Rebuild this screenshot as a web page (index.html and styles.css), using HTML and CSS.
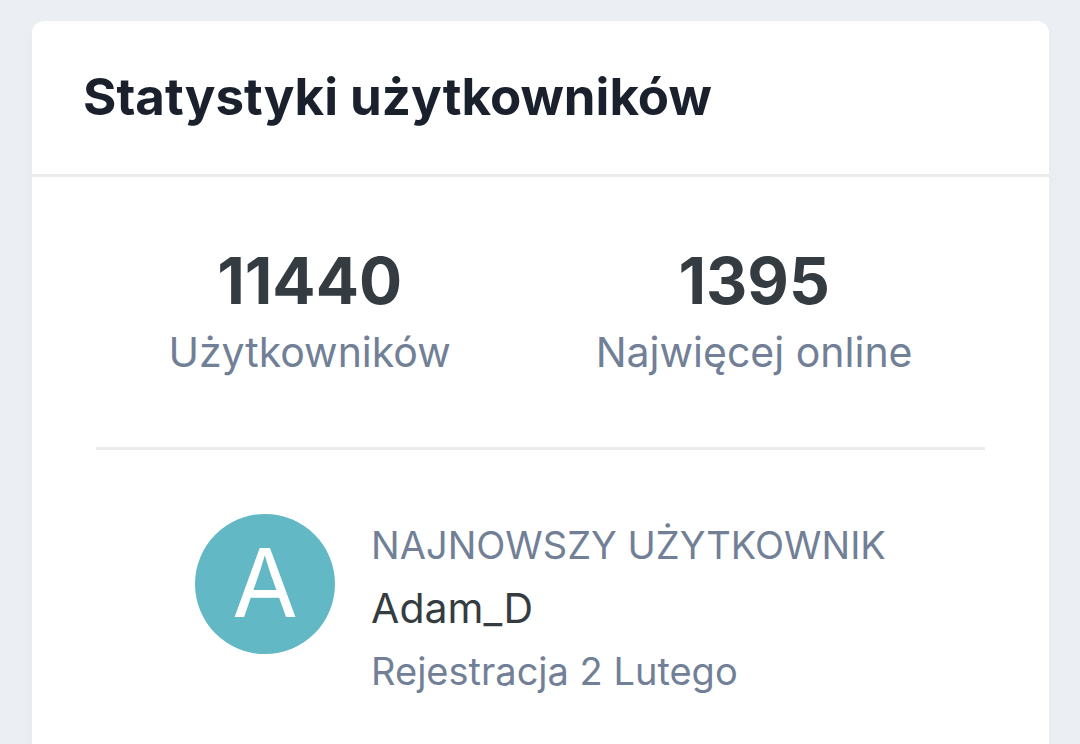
FILE: index.html
```html
<!DOCTYPE html>
<html lang="pl">
<head>
  <meta charset="UTF-8" />
  <meta name="viewport" content="width=device-width, initial-scale=1.0"/>
  <title>Statystyki użytkowników</title>
  <link rel="stylesheet" href="styles.css">
</head>
<body>

  <section class="widget">
    <h3 class="widget-title">Statystyki użytkowników</h3>
    <div class="widget-body">
      <dl class="stats">
        <div class="stat">
          <dd class="stat-value">11440</dd>
          <dt class="stat-label">Użytkowników</dt>
        </div>
        <div class="stat">
          <dd class="stat-value">1395</dd>
          <dt class="stat-label">Najwięcej online</dt>
        </div>
      </dl>
      <hr class="divider">
      <div class="member">
        <a class="avatar" href="#" aria-label="Adam_D">
          <svg viewBox="0 0 140 140" aria-hidden="true">
            <text x="70" y="103" text-anchor="middle">A</text>
          </svg>
        </a>
        <div class="member-info">
          <span class="minor">NAJNOWSZY UŻYTKOWNIK</span>
          <a class="member-name" href="#">Adam_D</a>
          <span class="minor">Rejestracja 2 Lutego</span>
        </div>
      </div>
    </div>
  </section>

</body>
</html>
```
FILE: styles.css
```css
* {
  box-sizing: border-box;
}

body {
  margin: 0;
  padding: 21px 31px 0 32px;
  min-height: 100vh;
  display: flex;
  background: #ebeff4;
  font-family: Inter, sans-serif;
  color: #353c41;
}

.widget {
  flex: 1;
  background: #fff;
  border-radius: 12px 12px 0 0;
  box-shadow: 0 6px 12px rgba(0, 0, 0, 0.03);
}

.widget-title {
  margin: 0;
  padding: 44px 51px 45px;
  border-bottom: 3px solid #ebebee;
  font-size: 51px;
  line-height: 64px;
  font-weight: 700;
  color: #1a202c;
}

.widget-body {
  padding: 64px;
}

.stats {
  display: flex;
  justify-content: space-around;
  margin: 0;
  text-align: center;
}

.stat {
  display: flex;
  flex-direction: column;
}

.stat-value {
  margin: 0;
  font-size: 64px;
  line-height: 80px;
  font-weight: 700;
}

.stat-label {
  font-size: 41px;
  line-height: 62px;
  color: #718096;
}

.divider {
  margin: 64px 0;
  border: 0;
  border-top: 3px solid #ebebee;
}

.member {
  display: flex;
  justify-content: center;
  gap: 36px;
}

.avatar {
  width: 140px;
  height: 140px;
  flex-shrink: 0;
  border-radius: 50%;
  background: #62b8c4;
}

.avatar text {
  fill: #fff;
  font-size: 95px;
}

.member-info {
  display: flex;
  flex-direction: column;
  line-height: 63px;
}

.minor {
  font-size: 38px;
  color: #718096;
}

.member-name {
  font-size: 41px;
  color: #353c41;
  text-decoration: none;
}
```
